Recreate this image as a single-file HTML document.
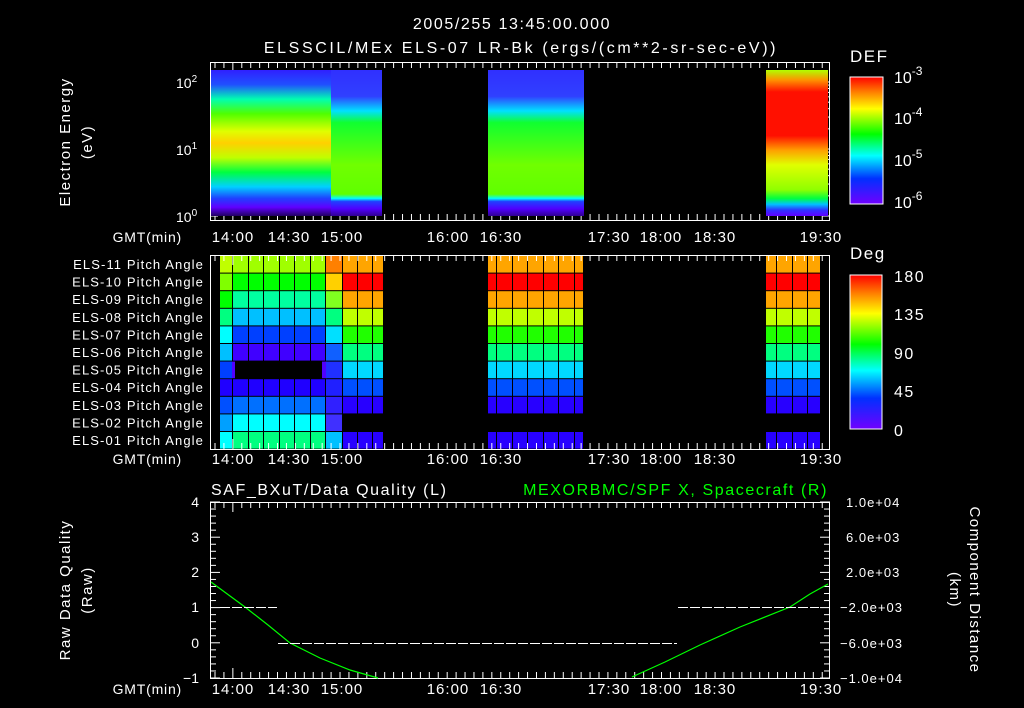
<!DOCTYPE html>
<html><head><meta charset="utf-8">
<style>
html,body{margin:0;padding:0;background:#000;width:1024px;height:708px;overflow:hidden}
svg{display:block}
text{font-family:"Liberation Sans",sans-serif;fill:#fff}
</style></head><body>
<svg id="s" width="1024" height="708" viewBox="0 0 1024 708" xmlns="http://www.w3.org/2000/svg">
<defs>
<linearGradient id="gA" x1="0" y1="70" x2="0" y2="216" gradientUnits="userSpaceOnUse">
<stop offset="0" stop-color="#3020ff"/><stop offset=".1" stop-color="#2050ff"/><stop offset=".2" stop-color="#00ffb0"/><stop offset=".3" stop-color="#50ff00"/><stop offset=".42" stop-color="#e0ff00"/><stop offset=".5" stop-color="#ffd000"/><stop offset=".6" stop-color="#c0ff00"/><stop offset=".7" stop-color="#00ff40"/><stop offset=".8" stop-color="#00d0ff"/><stop offset=".88" stop-color="#2040ff"/><stop offset=".94" stop-color="#6000ff"/><stop offset="1" stop-color="#200060"/></linearGradient>
<linearGradient id="gB" x1="0" y1="70" x2="0" y2="216" gradientUnits="userSpaceOnUse">
<stop offset="0" stop-color="#3030ff"/><stop offset=".18" stop-color="#3040ff"/><stop offset=".28" stop-color="#00e0ff"/><stop offset=".36" stop-color="#10ff30"/><stop offset=".65" stop-color="#70ff00"/><stop offset=".85" stop-color="#60ff00"/><stop offset=".88" stop-color="#00ffff"/><stop offset=".9" stop-color="#2040ff"/><stop offset=".95" stop-color="#5000ff"/><stop offset="1" stop-color="#300090"/></linearGradient>
<linearGradient id="gC" x1="0" y1="70" x2="0" y2="216" gradientUnits="userSpaceOnUse">
<stop offset="0" stop-color="#b0ff00"/><stop offset=".07" stop-color="#ff9000"/><stop offset=".15" stop-color="#ff1000"/><stop offset=".45" stop-color="#ff1000"/><stop offset=".55" stop-color="#ffa000"/><stop offset=".65" stop-color="#e0ff00"/><stop offset=".82" stop-color="#90ff00"/><stop offset=".88" stop-color="#00ff40"/><stop offset=".92" stop-color="#00c0ff"/><stop offset=".96" stop-color="#3030ff"/><stop offset="1" stop-color="#6000ff"/></linearGradient>
<linearGradient id="cb" x1="0" y1="0" x2="0" y2="1">
<stop offset="0" stop-color="#ff0000"/><stop offset=".12" stop-color="#ff8000"/><stop offset=".25" stop-color="#ffff00"/><stop offset=".45" stop-color="#00ff00"/><stop offset=".62" stop-color="#00ffff"/><stop offset=".8" stop-color="#0030ff"/><stop offset="1" stop-color="#7000ff"/></linearGradient>
</defs>
<g id="g"></g>
<text x="512" y="29" font-size="16" letter-spacing="1.6" text-anchor="middle">2005/255 13:45:00.000</text>
<text x="521" y="53" font-size="16" letter-spacing="2.6" text-anchor="middle">ELSSCIL/MEx ELS-07 LR-Bk  (ergs/(cm**2-sr-sec-eV))</text>
<rect x="211" y="70" width="120" height="146" fill="url(#gA)"/>
<rect x="331" y="70" width="51" height="146" fill="url(#gB)"/>
<rect x="488" y="70" width="96" height="146" fill="url(#gB)"/>
<rect x="766" y="70" width="62" height="146" fill="url(#gC)"/>
<rect x="850" y="77" width="33" height="127" fill="url(#cb)" stroke="#fff" stroke-width="1"/>
<text x="850" y="62" font-size="17" letter-spacing="1.5">DEF</text>
<text x="894" y="83" font-size="16">10<tspan font-size="12" dy="-8">-3</tspan></text>
<text x="894" y="124" font-size="16">10<tspan font-size="12" dy="-8">-4</tspan></text>
<text x="894" y="166" font-size="16">10<tspan font-size="12" dy="-8">-5</tspan></text>
<text x="894" y="208" font-size="16">10<tspan font-size="12" dy="-8">-6</tspan></text>
<text x="176" y="88" font-size="14">10<tspan font-size="10" dy="-6">2</tspan></text>
<text x="176" y="155" font-size="14">10<tspan font-size="10" dy="-6">1</tspan></text>
<text x="176" y="222" font-size="14">10<tspan font-size="10" dy="-6">0</tspan></text>
<text transform="translate(70,142) rotate(-90)" font-size="15" letter-spacing="1.5" text-anchor="middle">Electron Energy</text>
<text transform="translate(92,142) rotate(-90)" font-size="15" letter-spacing="1.5" text-anchor="middle">(eV)</text>
<rect x="850" y="275" width="32" height="154" fill="url(#cb)" stroke="#fff" stroke-width="1"/>
<text x="850" y="259" font-size="17" letter-spacing="1.5">Deg</text>
<g font-size="16" letter-spacing="1.5">
<text x="894" y="282">180</text>
<text x="894" y="320">135</text>
<text x="894" y="359">90</text>
<text x="894" y="397">45</text>
<text x="894" y="436">0</text>
</g>
<text x="211" y="495" font-size="16" letter-spacing="1.6">SAF_BXuT/Data Quality (L)</text>
<text x="828" y="495" font-size="16" letter-spacing="1.6" text-anchor="end" style="fill:#00ff00">MEXORBMC/SPF X, Spacecraft (R)</text>
<text transform="translate(70,590) rotate(-90)" font-size="15" letter-spacing="1.5" text-anchor="middle">Raw Data Quality</text>
<text transform="translate(92,590) rotate(-90)" font-size="15" letter-spacing="1.5" text-anchor="middle">(Raw)</text>
<text transform="translate(970,590) rotate(90)" font-size="15" letter-spacing="1.5" text-anchor="middle">Component Distance</text>
<text transform="translate(950,590) rotate(90)" font-size="15" letter-spacing="1.5" text-anchor="middle">(km)</text>
<g font-size="14" text-anchor="end">
<text x="199" y="507">4</text><text x="199" y="542">3</text><text x="199" y="577">2</text><text x="199" y="612">1</text><text x="199" y="648">0</text><text x="199" y="683">−1</text>
</g>
<g font-size="13" letter-spacing="1">
<text x="846" y="507">1.0e+04</text><text x="846" y="542">6.0e+03</text><text x="846" y="577">2.0e+03</text><text x="840" y="612">−2.0e+03</text><text x="840" y="648">−6.0e+03</text><text x="840" y="683">−1.0e+04</text>
</g>
<polyline fill="none" stroke="#00ff00" stroke-width="1.2" points="211,582 230,596 245,607 268,625 290,643 320,658 350,670 378,678"/>
<polyline fill="none" stroke="#00ff00" stroke-width="1.2" points="632,677 665,662 700,645 740,627 790,607 810,594 828,584"/>
<line x1="220" y1="607.5" x2="277" y2="607.5" stroke="#fff" stroke-dasharray="10,2"/>
<line x1="278" y1="643.5" x2="677" y2="643.5" stroke="#fff" stroke-dasharray="10,2"/>
<line x1="678" y1="607.5" x2="819" y2="607.5" stroke="#fff" stroke-dasharray="10,2"/>
</svg>
<script>
var g=document.getElementById('g'),h='';
function R(x,y,w,hh,c){h+='<rect x="'+x+'" y="'+y+'" width="'+w+'" height="'+hh+'" fill="'+c+'"/>';}
function L(a,b,c,d){h+='<line x1="'+a+'" y1="'+b+'" x2="'+c+'" y2="'+d+'" stroke="#fff" stroke-width="1"/>';}
function T(x,y,s,sz,anc,ls){h+='<text x="'+x+'" y="'+y+'" font-size="'+sz+'" letter-spacing="'+(ls||0)+'" text-anchor="'+(anc||'start')+'" fill="#fff" font-family="Liberation Sans,sans-serif">'+s+'</text>';}
var labels=['ELS-11','ELS-10','ELS-09','ELS-08','ELS-07','ELS-06','ELS-05','ELS-04','ELS-03','ELS-02','ELS-01'];
var lc=['#c0ff00','#80ff00','#00ff00','#00ff80','#00ffff','#00c0ff','#0040ff','#2000ff','#0050ff','#00a0ff','#00ffff'];
var mc=['#a0ff00','#00ff00','#00ffa0','#00c0ff','#0040ff','#4000ff','#000','#2000ff','#0070ff','#00ffff','#00ff80'];
var rc=['#ffa500','#ff0000','#ffa500','#c0ff00','#20ff00','#00ff80','#00d8ff','#0050ff','#2800ff','#000','#2800ff'];
var tc=['#ff8000','#ffd000','#80ff20','#00ff80','#00e0ff','#1060ff','#2030ff','#2020ff','#3020ff','#4030ff','#00c0ff'];
var b1=[232,248,263,279,294,310,325];
for(var i=0;i<11;i++){
 var y=256+i*17.6,hh=16.6;
 R(220,y,12,hh,lc[i]);
 for(var j=0;j<b1.length-1;j++)R(b1[j]+1,y,b1[j+1]-b1[j]-1,hh,mc[i]);
 if(i==6){R(220,y,12,hh,'#0040ff');R(232,y,3,hh,'#5000ff');R(322,y,5,hh,'#5000ff');}
 R(326,y,16,hh,tc[i]);
 [342,357,372].forEach(function(x,k){R(x+1,y,(k==2?10:14),hh,rc[i]);});
 [[488,496],[497,512],[513,527],[528,543],[544,558],[559,574],[575,583],[766,776],[777,792],[793,807],[808,820]].forEach(function(c){R(c[0],y,c[1]-c[0],hh,rc[i]);});
 T(204,y+13,labels[i]+' Pitch Angle',13,'end',1.1);
}
[[62,220],[255,449],[502,678]].forEach(function(p){
 h+='<rect x="210.5" y="'+p[0]+'.5" width="619" height="'+(p[1]-p[0])+'" fill="none" stroke="#fff"/>';
 for(var x=215;x<830;x+=8.93){var big=Math.abs(((x-233)/53.6)%1)<0.08;L(x,p[0],x,p[0]+(big?10:6));L(x,p[1],x,p[1]-(big?10:6));}
});
[0,1].forEach(function(d){for(var k=1;k<10;k++){var yy=216-67*(d+Math.log10(k));L(210,yy,k==1?218:214,yy);L(830,yy,k==1?822:826,yy);}});
L(210,82,218,82);L(830,82,822,82);
for(var k=0;k<=25;k++){var yy=502+k*7.04;var big=k%5==0;L(210,yy,big?220:216,yy);L(830,yy,big?820:824,yy);}
for(var k=0;k<=30;k++){var yy=204-k*4.23;L(883,yy,k%10==0?883:877,yy);}
var tl=[['14:00',233],['14:30',289],['15:00',342],['16:00',448],['16:30',501],['17:30',609],['18:00',661],['18:30',715],['19:30',821]];
[242,464,694].forEach(function(y){T(182,y,'GMT(min)',14,'end',0.8);tl.forEach(function(t){T(t[1],y,t[0],15,'middle',1);});});
g.innerHTML=h;
</script>
</body></html>
